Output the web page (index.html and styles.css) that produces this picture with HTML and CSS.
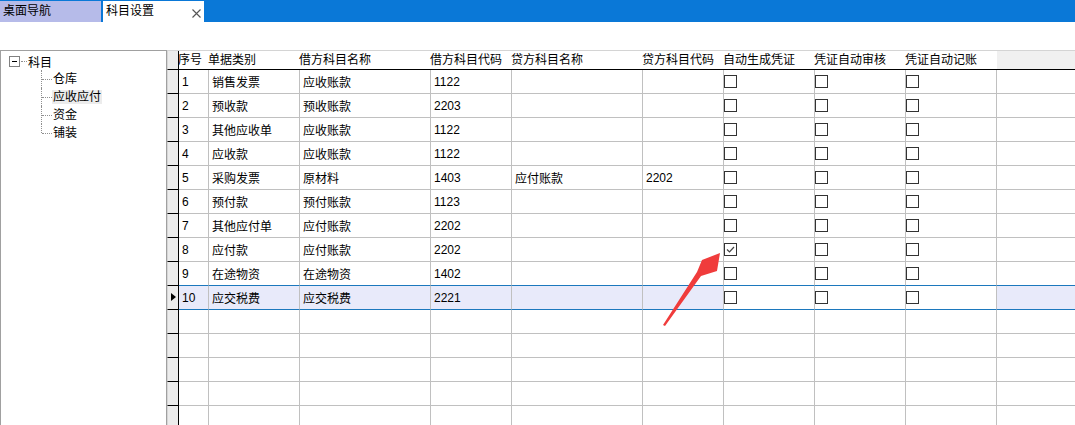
FILE: index.html
```html
<!DOCTYPE html>
<html lang="zh-CN">
<head>
  <meta charset="UTF-8">
  <title>科目设置</title>
  <link rel="stylesheet" href="styles.css">
</head>
<body>

  <!-- Tab bar -->
  <div class="tabbar">
    <div class="tab">桌面导航</div>
    <div class="tab active">科目设置
      <svg class="close" width="9" height="9" viewBox="0 0 9 9"><path d="M0.5 0.5L8.5 8.5M8.5 0.5L0.5 8.5" stroke="#555" stroke-width="1.1"/></svg>
    </div>
  </div>

  <div class="spacer"></div>

  <div class="main">
    <!-- Tree -->
    <div class="tree">
      <div class="tree-root">
        <span class="expander"></span>
        <span class="dots"></span>
        <span>科目</span>
      </div>
      <ul class="tree-children">
        <li>仓库</li>
        <li><span class="selected">应收应付</span></li>
        <li>资金</li>
        <li>铺装</li>
      </ul>
    </div>

    <!-- Grid -->
    <div class="grid">
      <div class="row head">
        <div class="rh"></div>
        <div class="hc">序号</div>
        <div class="hc">单据类别</div>
        <div class="hc">借方科目名称</div>
        <div class="hc">借方科目代码</div>
        <div class="hc">贷方科目名称</div>
        <div class="hc">贷方科目代码</div>
        <div class="hc">自动生成凭证</div>
        <div class="hc">凭证自动审核</div>
        <div class="hc">凭证自动记账</div>
        <div class="hc filler"></div>
      </div>
      <div id="rows"></div>
    </div>
  </div>

  <!-- Red annotation arrow -->
  <svg class="arrow" width="1075" height="425" viewBox="0 0 1075 425">
    <polygon points="663,325 697,272 702,260 720,253 717,271 701,276 665,326" fill="#f03c3c"/>
  </svg>

  <script>
    const data = [
      ['1', '销售发票', '应收账款', '1122', '', ''],
      ['2', '预收款', '预收账款', '2203', '', ''],
      ['3', '其他应收单', '应收账款', '1122', '', ''],
      ['4', '应收款', '应收账款', '1122', '', ''],
      ['5', '采购发票', '原材料', '1403', '应付账款', '2202'],
      ['6', '预付款', '预付账款', '1123', '', ''],
      ['7', '其他应付单', '应付账款', '2202', '', ''],
      ['8', '应付款', '应付账款', '2202', '', '', true],
      ['9', '在途物资', '在途物资', '1402', '', ''],
      ['10', '应交税费', '应交税费', '2221', '', '']
    ];
    const current = data.length - 1;
    const rows = document.getElementById('rows');
    const box = '<span class="box"></span>';
    const checked = '<span class="box"><svg width="11" height="11" viewBox="0 0 11 11"><path d="M2 5.5L4.5 8L9 3" fill="none" stroke="#444" stroke-width="1.2"/></svg></span>';

    data.forEach((r, i) => {
      const row = document.createElement('div');
      row.className = 'row' + (i === current ? ' current' : '') + (i === current - 1 ? ' before-current' : '');
      let html = '<div class="rh">' + (i === current ? '<span class="marker"></span>' : '') + '</div>';
      for (let c = 0; c < 6; c++) html += '<div class="cell">' + r[c] + '</div>';
      html += '<div class="cell chk">' + (r[6] ? checked : box) + '</div>';
      html += '<div class="cell chk">' + box + '</div>';
      html += '<div class="cell chk">' + box + '</div>';
      html += '<div class="cell last"></div>';
      row.innerHTML = html;
      rows.appendChild(row);
    });

    // empty rows to fill the view
    for (let i = 0; i < 5; i++) {
      const row = document.createElement('div');
      row.className = 'row';
      let html = '<div class="rh"></div>';
      for (let c = 0; c < 9; c++) html += '<div class="cell"></div>';
      html += '<div class="cell last"></div>';
      row.innerHTML = html;
      rows.appendChild(row);
    }
  </script>
</body>
</html>
```

FILE: styles.css
```css
body {
  margin: 0;
  padding: 0;
  height: 425px;
  overflow: hidden;
  background: #fff;
  font-family: 'Liberation Sans', 'Noto Sans CJK SC', sans-serif;
  font-size: 12px;
  color: #000;
  position: relative;
}

/* Tab bar */
.tabbar {
  height: 22px;
  background: #0a78d7;
  display: flex;
  gap: 2px;
  padding-top: 1px;
  box-sizing: border-box;
}

.tab {
  width: 101px;
  background: #b6bbe9;
  padding-left: 3px;
  box-sizing: border-box;
  line-height: 21px;
  position: relative;
  font-size: 12px;
}

.tab.active {
  background: #fff;
}

.tab .close {
  position: absolute;
  left: 89px;
  top: 8px;
}

.spacer {
  height: 28px;
}

.main {
  display: flex;
  height: 375px;
}

/* Tree panel */
.tree {
  width: 167px;
  box-sizing: border-box;
  border-top: 1px solid #a0a0a0;
  border-left: 1px solid #a0a0a0;
  border-right: 1px solid #a0a0a0;
  padding-top: 1px;
}

.tree-root {
  height: 18px;
  display: flex;
  align-items: center;
  padding-left: 8px;
}

.expander {
  width: 11px;
  height: 11px;
  box-sizing: border-box;
  border: 1px solid #808080;
  position: relative;
}

.expander::after {
  content: '';
  position: absolute;
  left: 2px;
  right: 2px;
  top: 4px;
  border-top: 1px solid #000;
}

.dots {
  width: 6px;
  margin: 0 1px 0 1px;
  border-top: 1px dotted #909090;
}

.tree-children {
  list-style: none;
  margin: 0 0 0 40px;
  padding: 0;
}

.tree-children li {
  height: 18px;
  line-height: 18px;
  padding-left: 12px;
  position: relative;
}

.tree-children li::before {
  content: '';
  position: absolute;
  left: 0;
  top: 0;
  height: 100%;
  border-left: 1px dotted #909090;
}

.tree-children li:last-child::before {
  height: 9px;
}

.tree-children li::after {
  content: '';
  position: absolute;
  left: 1px;
  top: 9px;
  width: 10px;
  border-top: 1px dotted #909090;
}

.selected {
  background: #ececec;
  padding: 0 1px;
  margin-left: -1px;
}

/* Grid */
.grid {
  flex: 1;
  border-top: 1px solid #d4d4d4;
  overflow: hidden;
}

.row {
  display: grid;
  grid-template-columns: 12px 30px 91px 131px 81px 131px 81px 91px 91px 91px 1fr;
  height: 24px;
}

.row.head {
  height: 19px;
}

.rh {
  background: #ececec;
  box-sizing: border-box;
  border-left: 1px solid #d6d6d6;
  border-right: 1px solid #000;
  border-bottom: 1px solid #000;
  position: relative;
}

.hc {
  box-sizing: border-box;
  border-bottom: 1px solid #000;
  white-space: nowrap;
  line-height: 18px;
  margin-left: -1px;
}

.hc.filler {
  background: #f0f0f0;
  margin-left: 0;
}

.cell {
  box-sizing: border-box;
  border-right: 1px solid #c0c0c0;
  border-bottom: 1px solid #c0c0c0;
  padding-left: 3px;
  display: flex;
  align-items: center;
  white-space: nowrap;
  overflow: hidden;
}

.cell.last {
  border-right: none;
}

.cell.chk {
  padding-left: 0;
}

.box {
  width: 13px;
  height: 13px;
  box-sizing: border-box;
  border: 1px solid #333;
  background: #fff;
  display: flex;
  align-items: center;
  justify-content: center;
}

/* current row */
.row.current .cell {
  background: #e8eafa;
  border-bottom-color: #1c78bd;
}

.row.current .cell.chk {
  background: #fff;
}

.row.before-current .cell {
  border-bottom-color: #1c78bd;
}

.marker {
  position: absolute;
  left: 3px;
  top: 7px;
  width: 0;
  height: 0;
  border-top: 4px solid transparent;
  border-bottom: 4px solid transparent;
  border-left: 5px solid #000;
}

/* annotation */
.arrow {
  position: absolute;
  left: 0;
  top: 0;
  pointer-events: none;
}
```
